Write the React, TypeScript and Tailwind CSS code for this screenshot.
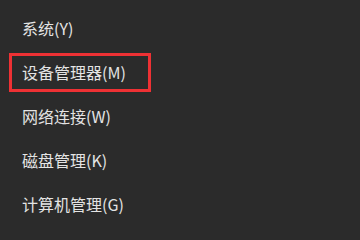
import React from "react";

const items = [
  "系统(Y)",
  "设备管理器(M)",
  "网络连接(W)",
  "磁盘管理(K)",
  "计算机管理(G)",
  "Windows PowerShell(I)",
];

export default function App() {
  return (
    <div
      className="h-[240px] w-[360px] overflow-hidden bg-[#2b2b2b] pt-[6px] text-[16px] text-[#e4e4e4]"
      style={{ fontFamily: '"Noto Sans CJK SC", "Noto Sans", sans-serif' }}
    >
      {items.map((label, i) => (
        <div key={label} className="flex h-[44px] items-center">
          {i === 1 ? (
            <div className="ml-[9px] flex h-[39px] w-[142px] items-center border-[3px] border-[#ee3134] pl-[10px]">
              {label}
            </div>
          ) : (
            <span className="pl-[22px]">{label}</span>
          )}
        </div>
      ))}
    </div>
  );
}
